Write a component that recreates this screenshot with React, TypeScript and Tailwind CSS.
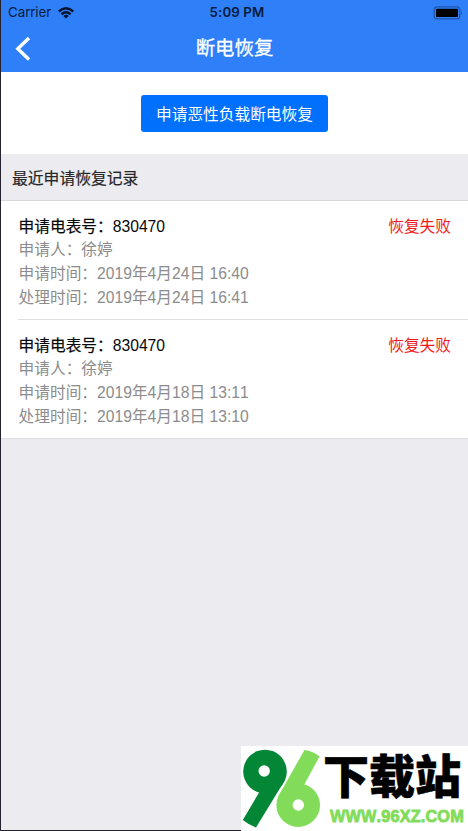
type RecordItem = { meter: string; person: string; applied: string; handled: string; status: string };

const records: RecordItem[] = [
  { meter: '830470', person: '徐婷', applied: '2019年4月24日 16:40', handled: '2019年4月24日 16:41', status: '恢复失败' },
  { meter: '830470', person: '徐婷', applied: '2019年4月18日 13:11', handled: '2019年4月18日 13:10', status: '恢复失败' },
];

function StatusBar() {
  return (
    <div className="grid h-[25px] grid-cols-3 items-center pl-[7px] pr-[5px] font-['Inter',sans-serif] text-[13.3px] text-[#071b3c]">
      <div className="flex items-center gap-[7px]">
        <span>Carrier</span>
        <svg width="16" height="12" viewBox="0 0 16 12" fill="none" stroke="#04132d" strokeWidth="2.4">
          <path d="M0.8 4.5 Q8 -2 15.2 4.5" />
          <path d="M3.5 7.3 Q8 3.4 12.5 7.3" />
          <path d="M8 11.5 L5.4 8.9 Q8 6.8 10.6 8.9 Z" fill="#04132d" stroke="none" />
        </svg>
      </div>
      <span className="pl-[3px] text-center font-semibold tracking-[0.1px]">5:09 PM</span>
      <div className="flex justify-end">
        <svg width="30" height="14" viewBox="0 0 30 14">
          <rect x="1.2" y="0.9" width="25.6" height="12" rx="3" fill="none" stroke="#1d55ab" strokeWidth="1.2" />
          <rect x="3" y="2.7" width="22" height="8.4" rx="1.2" fill="#000" />
          <path d="M28 5 Q30 7 28 9 Z" fill="#1d55ab" />
        </svg>
      </div>
    </div>
  );
}

function RecordRow({ item, last }: { item: RecordItem; last: boolean }) {
  return (
    <div className={last ? 'ml-[17px] h-[118px] pl-[0.6px] pr-[17px] pt-[13.6px]' : 'ml-[17px] h-[119px] border-b border-[#dedee0] pl-[0.6px] pr-[17px] pt-[13.6px]'}>
      <div className="flex justify-between whitespace-nowrap text-[15.7px] leading-[23.7px]">
        <span className="text-[#080808] [-webkit-text-stroke:0.2px_#080808]">申请电表号：<span className="[-webkit-text-stroke:0px]">{item.meter}</span></span>
        <span className="text-[#ef1c1c]">{item.status}</span>
      </div>
      <div className="text-[15.7px] leading-[23.7px] text-[#8c8c8c]">
        <p>申请人：{item.person}</p>
        <p>申请时间：{item.applied}</p>
        <p>处理时间：{item.handled}</p>
      </div>
    </div>
  );
}

function Watermark() {
  return (
    <div className="absolute bottom-0 right-0 flex h-[85px] w-[227px] bg-white">
      <svg className="shrink-0" width="82" height="85" viewBox="241 746 82 85">
        <g fill="#048637">
          <circle cx="265" cy="771.5" r="21.8" />
          <path d="M285 780 L256 827.4 Q248 824.5 242.8 820 L260 791 Z" />
        </g>
        <g fill="#82dc5a">
          <circle cx="298.2" cy="805.2" r="21.8" />
          <path d="M278.5 796 L304.5 750 Q313 751 319.5 756.5 L304 785 Z" />
        </g>
        <circle cx="264.2" cy="771" r="5.7" fill="#fff" />
        <circle cx="298.3" cy="805" r="5.7" fill="#fff" />
      </svg>
      <div className="flex flex-col">
        <span className="h-[58px] whitespace-nowrap font-['Noto_Sans_CJK_SC',sans-serif] text-[46px] font-black leading-[54px] text-black [-webkit-text-stroke:0.6px_#000]">下载站</span>
        <span className="ml-[7px] w-[135px] whitespace-nowrap font-['Liberation_Sans',sans-serif] text-[16.3px] font-bold leading-[24px] tracking-[0.15px] text-[#82dc5a] [-webkit-text-stroke:0.8px_#82dc5a] [font-kerning:none]">WWW.96XZ.COM</span>
      </div>
    </div>
  );
}

export default function App() {
  return (
    <div className="relative h-[831px] w-[468px] overflow-hidden bg-[#ebebf0] font-['Liberation_Sans','Noto_Sans_CJK_SC',sans-serif] [font-kerning:none]">
      <div className="h-[831px] border-b border-l border-[#24222e]">
        <header className="h-[72px] bg-[#2f80f8]">
          <StatusBar />
          <div className="grid h-[47px] grid-cols-[60px_1fr_60px] items-center">
            <svg className="ml-[13px]" width="18" height="26" viewBox="0 0 18 26" fill="none" stroke="#fff" strokeWidth="3.4">
              <path d="M15 2 L3.8 12.7 L15 23.4" />
            </svg>
            <h1 className="text-center text-[19.4px] text-white [-webkit-text-stroke:0.3px_#fff]">断电恢复</h1>
          </div>
        </header>
        <section className="flex h-[82px] items-center justify-center bg-white">
          <button className="h-[37px] w-[187px] whitespace-nowrap rounded-[3px] bg-[#0070fd] pt-[3px] text-[15.7px] text-white">申请恶性负载断电恢复</button>
        </section>
        <h2 className="flex h-[47px] items-center border-b border-[#d8d8dc] pl-[11px] pt-[4px] text-[15.8px] text-[#262628] [-webkit-text-stroke:0.2px_#262628]">最近申请恢复记录</h2>
        <main className="border-b border-[#dedee2] bg-white">
          {records.map((item, i) => (
            <RecordRow key={item.applied} item={item} last={i === records.length - 1} />
          ))}
        </main>
      </div>
      <Watermark />
    </div>
  );
}
